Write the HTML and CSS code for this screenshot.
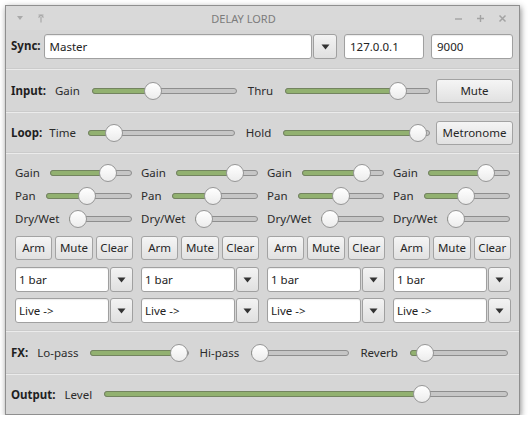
FILE: index.html
```html
<!DOCTYPE html>
<html lang="en">
<head>
    <meta charset="UTF-8">
    <title>Delay Lord</title>
    <link rel="stylesheet" href="styles.css">
</head>
<body>
    <div class="window">
        <div class="titlebar">
            <div class="tb-left">
                <svg width="8" height="6" viewBox="0 0 8 6"><path d="M1 1h6L4 5z" fill="#a9a9a9"/></svg>
                <svg width="8" height="9" viewBox="0 0 8 9"><path d="M4 8.5V3M1.5 3.5L4 1l2.5 2.5M1.5 1h5" stroke="#a9a9a9" stroke-width="1.2" fill="none"/></svg>
            </div>
            <div class="title">DELAY LORD</div>
            <div class="tb-right">
                <svg width="9" height="9" viewBox="0 0 9 9"><path d="M1 5h7" stroke="#a3a3a3" stroke-width="1.4"/></svg>
                <svg width="9" height="9" viewBox="0 0 9 9"><path d="M1 4.5h7M4.5 1v7" stroke="#a3a3a3" stroke-width="1.4"/></svg>
                <svg width="9" height="9" viewBox="0 0 9 9"><path d="M1.5 1.5l6 6M7.5 1.5l-6 6" stroke="#a3a3a3" stroke-width="1.5"/></svg>
            </div>
        </div>

        <div class="section sync">
            <span class="heading">Sync:</span>
            <div class="combo">
                <div class="entry">Master</div>
                <div class="drop"><svg width="9" height="6" viewBox="0 0 9 6"><path d="M0.5 0.5h8L4.5 5.5z" fill="#333"/></svg></div>
            </div>
            <div class="entry host">127.0.0.1</div>
            <div class="entry port">9000</div>
        </div>
        <div class="sep"></div>

        <div class="section row input">
            <span class="heading">Input:</span>
            <span class="label">Gain</span>
            <div class="slider" style="--v:0.41"><div class="track"></div><div class="fill"></div><div class="knob"></div></div>
            <span class="label">Thru</span>
            <div class="slider" style="--v:0.82"><div class="track"></div><div class="fill"></div><div class="knob"></div></div>
            <div class="button side">Mute</div>
        </div>
        <div class="sep"></div>

        <div class="section row loop">
            <span class="heading">Loop:</span>
            <span class="label">Time</span>
            <div class="slider" style="--v:0.13"><div class="track"></div><div class="fill"></div><div class="knob"></div></div>
            <span class="label">Hold</span>
            <div class="slider" style="--v:0.98"><div class="track"></div><div class="fill"></div><div class="knob"></div></div>
            <div class="button side">Metronome</div>
        </div>
        <div class="sep"></div>

        <div class="section tracks">
            <div class="track-col">
                <div class="trow"><span class="label">Gain</span><div class="slider" style="--v:0.77"><div class="track"></div><div class="fill"></div><div class="knob"></div></div></div>
                <div class="trow"><span class="label">Pan</span><div class="slider" style="--v:0.48"><div class="track"></div><div class="fill"></div><div class="knob"></div></div></div>
                <div class="trow"><span class="label">Dry/Wet</span><div class="slider" style="--v:0"><div class="track"></div><div class="fill"></div><div class="knob"></div></div></div>
                <div class="btns"><div class="button">Arm</div><div class="button">Mute</div><div class="button">Clear</div></div>
                <div class="combo small"><div class="entry">1 bar</div><div class="drop"><svg width="9" height="6" viewBox="0 0 9 6"><path d="M0.5 0.5h8L4.5 5.5z" fill="#333"/></svg></div></div>
                <div class="combo small"><div class="entry">Live -&gt;</div><div class="drop"><svg width="9" height="6" viewBox="0 0 9 6"><path d="M0.5 0.5h8L4.5 5.5z" fill="#333"/></svg></div></div>
            </div>
            <div class="track-col">
                <div class="trow"><span class="label">Gain</span><div class="slider" style="--v:0.78"><div class="track"></div><div class="fill"></div><div class="knob"></div></div></div>
                <div class="trow"><span class="label">Pan</span><div class="slider" style="--v:0.47"><div class="track"></div><div class="fill"></div><div class="knob"></div></div></div>
                <div class="trow"><span class="label">Dry/Wet</span><div class="slider" style="--v:0"><div class="track"></div><div class="fill"></div><div class="knob"></div></div></div>
                <div class="btns"><div class="button">Arm</div><div class="button">Mute</div><div class="button">Clear</div></div>
                <div class="combo small"><div class="entry">1 bar</div><div class="drop"><svg width="9" height="6" viewBox="0 0 9 6"><path d="M0.5 0.5h8L4.5 5.5z" fill="#333"/></svg></div></div>
                <div class="combo small"><div class="entry">Live -&gt;</div><div class="drop"><svg width="9" height="6" viewBox="0 0 9 6"><path d="M0.5 0.5h8L4.5 5.5z" fill="#333"/></svg></div></div>
            </div>
            <div class="track-col">
                <div class="trow"><span class="label">Gain</span><div class="slider" style="--v:0.8"><div class="track"></div><div class="fill"></div><div class="knob"></div></div></div>
                <div class="trow"><span class="label">Pan</span><div class="slider" style="--v:0.5"><div class="track"></div><div class="fill"></div><div class="knob"></div></div></div>
                <div class="trow"><span class="label">Dry/Wet</span><div class="slider" style="--v:0"><div class="track"></div><div class="fill"></div><div class="knob"></div></div></div>
                <div class="btns"><div class="button">Arm</div><div class="button">Mute</div><div class="button">Clear</div></div>
                <div class="combo small"><div class="entry">1 bar</div><div class="drop"><svg width="9" height="6" viewBox="0 0 9 6"><path d="M0.5 0.5h8L4.5 5.5z" fill="#333"/></svg></div></div>
                <div class="combo small"><div class="entry">Live -&gt;</div><div class="drop"><svg width="9" height="6" viewBox="0 0 9 6"><path d="M0.5 0.5h8L4.5 5.5z" fill="#333"/></svg></div></div>
            </div>
            <div class="track-col">
                <div class="trow"><span class="label">Gain</span><div class="slider" style="--v:0.77"><div class="track"></div><div class="fill"></div><div class="knob"></div></div></div>
                <div class="trow"><span class="label">Pan</span><div class="slider" style="--v:0.49"><div class="track"></div><div class="fill"></div><div class="knob"></div></div></div>
                <div class="trow"><span class="label">Dry/Wet</span><div class="slider" style="--v:0"><div class="track"></div><div class="fill"></div><div class="knob"></div></div></div>
                <div class="btns"><div class="button">Arm</div><div class="button">Mute</div><div class="button">Clear</div></div>
                <div class="combo small"><div class="entry">1 bar</div><div class="drop"><svg width="9" height="6" viewBox="0 0 9 6"><path d="M0.5 0.5h8L4.5 5.5z" fill="#333"/></svg></div></div>
                <div class="combo small"><div class="entry">Live -&gt;</div><div class="drop"><svg width="9" height="6" viewBox="0 0 9 6"><path d="M0.5 0.5h8L4.5 5.5z" fill="#333"/></svg></div></div>
            </div>
        </div>
        <div class="sep"></div>

        <div class="section row fx">
            <span class="heading">FX:</span>
            <span class="label">Lo-pass</span>
            <div class="slider" style="--v:0.99"><div class="track"></div><div class="fill"></div><div class="knob"></div></div>
            <span class="label">Hi-pass</span>
            <div class="slider" style="--v:0"><div class="track"></div><div class="fill"></div><div class="knob"></div></div>
            <span class="label">Reverb</span>
            <div class="slider" style="--v:0.07"><div class="track"></div><div class="fill"></div><div class="knob"></div></div>
        </div>
        <div class="sep"></div>

        <div class="section row output">
            <span class="heading">Output:</span>
            <span class="label">Level</span>
            <div class="slider" style="--v:0.8"><div class="track"></div><div class="fill"></div><div class="knob"></div></div>
        </div>
    </div>
</body>
</html>
```

FILE: styles.css
```css
body {
    margin: 0;
    background-color: #ffffff;
    font-family: 'Noto Sans', 'Open Sans', sans-serif;
    font-size: 11.5px;
    color: #2b2b2b;
}

.window {
    margin: 5px 0 0 5px;
    width: 513px;
    height: 408px;
    background-color: #d6d6d6;
    border: 1px solid #8f8f8f;
    box-shadow: 1px 2px 6px rgba(0, 0, 0, 0.45);
    display: flex;
    flex-direction: column;
}

/* title bar */
.titlebar {
    height: 24px;
    display: flex;
    align-items: center;
    background-color: #d9d9d9;
}

.tb-left {
    display: flex;
    align-items: center;
    gap: 13px;
    padding-left: 10px;
}

.title {
    flex: 1;
    text-align: center;
    color: #7c7c7c;
    font-size: 11px;
    padding-right: 12px;
}

.tb-right {
    display: flex;
    align-items: center;
    gap: 13px;
    padding-right: 12px;
}

/* sections */
.section {
    display: flex;
    padding: 0 6px 0 5px;
}

.sep {
    height: 1px;
    border-top: 1px solid #cbcbcb;
    background-color: #ebebeb;
}

.heading {
    font-weight: bold;
    color: #1f1f1f;
}

.label {
    white-space: nowrap;
}

.sync {
    height: 34px;
    padding-top: 4px;
    align-items: flex-start;
}

.sync .heading {
    margin-top: 4px;
    margin-right: 3px;
}

.row {
    align-items: center;
}

.row .heading {
    margin-right: 9px;
}

.row .label {
    margin-right: 12px;
}

.row .slider {
    margin-right: 11px;
}

.input { height: 41px; }
.loop { height: 39px; }
.fx { height: 41px; padding-right: 0; }
.output { height: 38px; padding-right: 0; }

.loop .heading { margin-right: 7px; }

/* entries and combos */
.entry {
    background-color: #ffffff;
    border: 1px solid #a0a0a0;
    border-radius: 3px;
    box-shadow: inset 0 1px 1px rgba(0, 0, 0, 0.08);
    height: 23px;
    line-height: 23px;
    padding-left: 5px;
    color: #222;
}

.combo {
    flex: 1;
    display: flex;
    gap: 1px;
}

.combo .entry {
    flex: 1;
}

.drop {
    width: 22px;
    height: 23px;
    border: 1px solid #a0a0a0;
    border-radius: 3px;
    background: linear-gradient(#f3f3f3, #e0e0e0);
    display: flex;
    align-items: center;
    justify-content: center;
}

.host {
    width: 73px;
    margin-left: 7px;
}

.port {
    width: 75px;
    margin-left: 7px;
}

/* buttons */
.button {
    height: 22px;
    line-height: 22px;
    border: 1px solid #a3a3a3;
    border-radius: 3px;
    background: linear-gradient(#f5f5f5, #e1e1e1);
    text-align: center;
    color: #262626;
}

.button.side {
    width: 75px;
    margin-left: -5px;
}

/* sliders */
.slider {
    flex: 1;
    position: relative;
    height: 18px;
}

.slider .track {
    position: absolute;
    left: 0;
    right: 0;
    top: 6px;
    height: 4px;
    border: 1px solid #8e8e8e;
    border-radius: 3px;
    background-color: #c6c6c6;
}

.slider .fill {
    position: absolute;
    left: 0;
    top: 6px;
    height: 6px;
    width: calc((100% - 18px) * var(--v) + 9px);
    border: 1px solid #73845f;
    border-radius: 3px;
    background-color: #92b170;
    box-sizing: border-box;
}

.slider .knob {
    position: absolute;
    top: 0;
    left: calc((100% - 18px) * var(--v));
    width: 16px;
    height: 16px;
    border: 1px solid #979797;
    border-radius: 50%;
    background: linear-gradient(#ffffff, #ececec);
}

/* track columns */
.tracks {
    height: 169px;
    padding: 7px 8px 0 9px;
    display: grid;
    grid-template-columns: repeat(4, 1fr);
    column-gap: 8px;
}

.track-col {
    display: flex;
    flex-direction: column;
}

.trow {
    height: 23px;
    display: flex;
    align-items: center;
    gap: 10px;
    padding-right: 1px;
}

.btns {
    display: flex;
    gap: 3px;
    margin-top: 6px;
}

.btns .button {
    flex: 1;
}

.combo.small {
    flex: none;
    margin-top: 7px;
}

.combo.small + .combo.small {
    margin-top: 6px;
}

.combo.small .entry {
    padding-left: 3px;
}

.combo.small .drop {
    width: 21px;
}
```
